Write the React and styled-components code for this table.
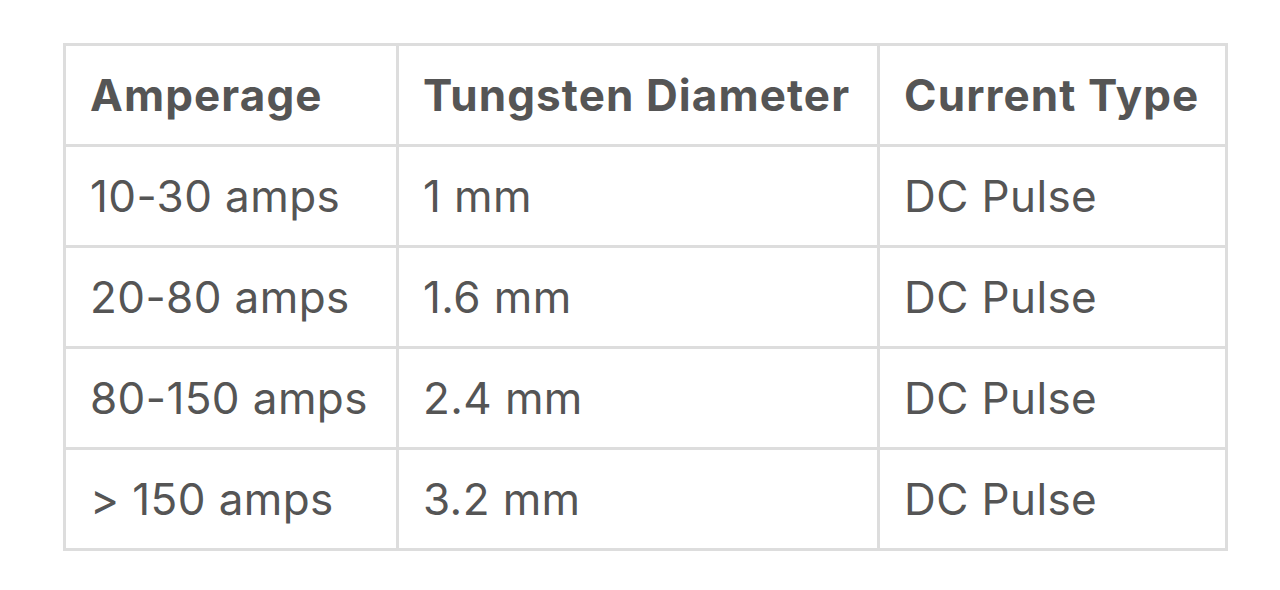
import React from "react";
import styled, { createGlobalStyle } from "styled-components";

const Global = createGlobalStyle`
  html, body { margin: 0; padding: 0; background: #ffffff; }
  body { font-family: Inter, "Noto Sans", sans-serif; }
`;

const Page = styled.div`
  width: 1280px;
  height: 590px;
  box-sizing: border-box;
  padding: 43px 0 0 63px;
`;

const Table = styled.table`
  border-collapse: collapse;
  width: 1162px;
  table-layout: fixed;
  color: #555555;
`;

const Cell = styled.td`
  border: 3px solid #dddddd;
  height: 101px;
  padding: 0 0 0 24px;
  box-sizing: border-box;
  font-size: 44px;
  font-weight: ${(p) => (p.$head ? 700 : 400)};
  letter-spacing: ${(p) => (p.$head ? "1.1px" : "0.4px")};
  white-space: nowrap;
  vertical-align: middle;
  text-align: left;
`;

const rows = [
  ["10-30 amps", "1 mm", "DC Pulse"],
  ["20-80 amps", "1.6 mm", "DC Pulse"],
  ["80-150 amps", "2.4 mm", "DC Pulse"],
  ["> 150 amps", "3.2 mm", "DC Pulse"],
];

export default function App() {
  return (
    <>
      <Global />
      <Page>
        <Table>
          <colgroup>
            <col style={{ width: 333 }} />
            <col style={{ width: 481 }} />
            <col style={{ width: 348 }} />
          </colgroup>
          <thead>
            <tr>
              <Cell as="th" $head>Amperage</Cell>
              <Cell as="th" $head>Tungsten Diameter</Cell>
              <Cell as="th" $head>Current Type</Cell>
            </tr>
          </thead>
          <tbody>
            {rows.map((r, i) => (
              <tr key={i}>
                {r.map((c, j) => (
                  <Cell key={j}>{c}</Cell>
                ))}
              </tr>
            ))}
          </tbody>
        </Table>
      </Page>
    </>
  );
}
